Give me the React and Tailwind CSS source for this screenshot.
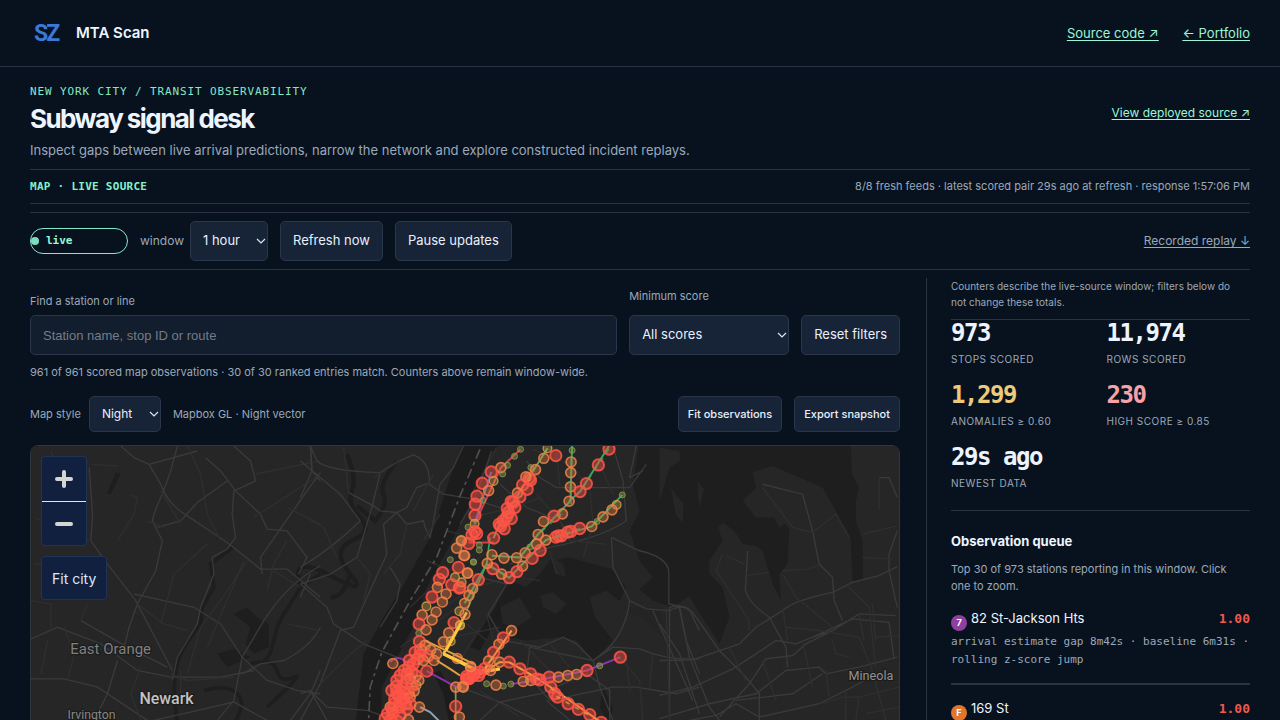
import React from "react";

const RED = "#ff5546";
const ORANGE = "#ee8248";
const OLIVE = "#cfa048";
const GREEN = "#8c9a4c";

const ringStyle = {
  R: { color: RED, r: 17, w: 6, fill: 0.45 },
  O: { color: ORANGE, r: 15, w: 5, fill: 0.38 },
  Y: { color: OLIVE, r: 13, w: 4, fill: 0.38 },
  G: { color: GREEN, r: 9, w: 3, fill: 0.45 },
};

const eastDots = `G182,25 G164,46 G143,73 O123,80 R94,93 G128,99 Y101,120 R67,127 O86,149 R51,166 G69,178 R46,190 R45,224 Y44,249 G24,259
Y263,22 O252,52 R288,44 G213,80 O227,86 R208,112 R212,118 O198,108 R188,132 R202,145 O173,156 R180,168 R154,182 R165,200 R160,184 R142,203 R140,228 R154,233 R130,240 R118,250 R133,264 R122,256 R146,215 R101,292
G337,28 O334,63 O333,95 O332,138 O328,181 R448,24 R416,72 R380,128 R361,152 O308,219 R283,226 O251,242 O235,281 G488,162 Y471,192 O457,207 O430,228 G412,242 O396,257 R360,263 R333,272 R305,285 R288,289 O258,298
O230,310 G210,319 O196,336 O170,351 O132,352 O96,342 R241,329 R217,353 O188,376 R171,393 R148,411 O125,400 R99,384 O82,368 R324,274 R296,285
R50,278 R36,282 R26,308 R44,272 O4,300 O14,345 G58,313 G58,328 G40,364 O22,397 R55,417 O38,444 O27,464 O14,488 O15,521 Y0,555 Y5,425 R0,440
O155,570 R130,592 O117,611 R101,636 O86,661 R75,684 O92,690 R56,705 R28,714 R40,700 R20,715 O32,678 O119,665 R148,665 R180,685 R212,700 R240,718 O190,723 O213,720 G153,731 G130,737 O108,734 G80,730 R268,710 O296,710 O324,705 O351,702 R382,690 G420,676 R482,650 R273,740 R293,770 R325,790 R356,807 R390,823 R425,846 R230,715 R285,760 O10,740`;

const westDots = `Y483,299 O470,322 O492,344 G451,357 R475,380 G521,364 O503,397 R428,396 R418,416 O412,440 Y465,410 R455,432 R478,442 O438,460 R396,469 O427,484 Y379,497 O408,514 O366,523 O396,538 R357,550 O378,568 G356,578 R462,546 Y478,512 Y480,553 O446,577 O430,604 Y452,602 R358,603 R361,628 R345,636 O375,614 O392,628 R384,646 O402,660 R352,655 O410,640 R328,660 O278,669 R340,670 R326,680 R312,690 R335,695 R380,692 R300,705 R346,705 R290,720 O330,715 R318,725 O356,720 Y349,735 R305,742 R275,750 R288,738 O342,752 R325,756 R295,765 R310,775 O330,770 R282,790 R298,800 R320,805 O270,800 R330,790 O358,800 R262,820 R278,818 R300,825 R270,840 R290,842 R255,835 O325,838 R310,755 R336,735 R290,755 R322,700 O370,660 R360,645 R284,775 R316,790 R276,805 R300,785 O472,654 O512,680 R540,695 O467,740 O488,738 R467,798 O478,830 R505,715 R500,708 R520,705`;

function Dots({ data }) {
  return data.trim().split(/\s+/).map((item, i) => {
    const s = ringStyle[item[0]];
    const [x, y] = item.slice(1).split(",");
    return (
      <circle key={i} cx={x} cy={y} r={s.r} fill={s.color} fillOpacity={s.fill} stroke={s.color} strokeOpacity="0.85" strokeWidth={s.w} />
    );
  });
}

function CityMap() {
  return (
    <svg viewBox="0 0 2610 1200" className="block w-full bg-[#262626]" aria-label="Map of scored subway stations" role="img">
      <g transform="translate(1890 -15)" fill="#1e1e1e">
        <path d="M-60 0H575L578 100 600 140 590 180 590 240 610 300 612 420 580 420 575 290 530 210 490 140 340 75 280 95 290 140 250 180 290 230 350 230 390 260 385 370 360 400 365 480 340 430 310 330 290 315 250 310 225 270 190 245 175 260 190 300 150 360 150 400 190 440 210 530 180 610 110 500 90 465 40 500 -20 480 -60 445 -20 410 -60 360 -90 270 -60 210 -80 130Z" />
        <path fill="#262626" d="M115 123 133 145 120 200 115 160ZM0 20 60 30 62 60 30 80 0 180ZM34 140 72 190 70 245 50 225ZM345 230 390 240 360 260Z" />
      </g>
      <g transform="translate(1290 -15)" fill="#1e1e1e">
        <path d="M150 420 200 440 240 400 270 360 330 350 400 370 455 385 500 440 480 480 440 450 390 470 405 530 460 600 400 660 350 600 300 590 200 600 150 590 100 560 110 490ZM430 740 460 800 450 860 420 800Z" />
        <path fill="#262626" d="M120 500 180 470 215 530 170 560 130 550ZM240 465 280 455 320 490 290 520 250 500ZM280 350 310 370 320 410 290 400Z" />
        <path d="M480 500 600 500 620 600 560 540Z" fill="#242424" />
      </g>
      <g transform="translate(810 -15)" fill="#1c1c1c">
        <path d="M490 0 450 110 395 280 300 450 250 530 190 640 160 900H240L245 740 290 650 340 560 380 440 440 330 500 210 545 110 600 0Z" />
        <path d="M450 860 430 760 400 700 420 690 470 780 480 860ZM510 620 560 540 600 480 600 520 540 630Z" />
        <path d="M140 40Q170 110 155 150T180 230 155 300 150 400 90 405 0 430M290 60Q235 130 250 160T225 240L170 195M150 400Q130 470 90 470" fill="none" stroke="#1e1e1e" strokeWidth="13" />
      </g>
      <g transform="translate(-30 -15)">
        <path fill="#1e1e1e" d="M285 95 300 98 270 160 258 158ZM640 520 680 500 710 530 745 550 745 620 700 640 675 610 690 560ZM590 640 640 625 690 650 620 680Z" />
        <path d="M840 440Q810 490 790 520T760 600 730 660M900 400 840 440M690 670Q760 650 770 690T820 710 740 800M550 750Q620 730 650 760T640 850M470 850Q455 750 465 690T540 550L545 500 580 440 570 370 635 320" fill="none" stroke="#1e1e1e" strokeWidth="11" />
      </g>

      <g fill="none" stroke="#3a3a3a" strokeWidth="4">
        <g transform="translate(-30 -15)">
          <path d="M300 15 340 50 385 70 420 130Q440 190 500 225L620 305 720 385 800 385 900 470M385 70 530 30M470 15 450 90 425 160Q400 210 395 240L425 300 405 390 350 490 325 560 310 620M640 15 690 60 705 120 640 150 635 220 645 290 620 325 575 350 580 400 540 500 530 550 470 650 455 720M555 50 600 90 645 150 720 220 740 265 800 270 860 350 835 400M900 95 860 150 790 250 720 350 725 400M870 15 875 90 900 120M410 260 480 240 530 185 620 120M205 80 215 220 210 300 260 370 345 480 455 690M900 375Q800 430 730 540L665 650 640 780M30 595 110 560 240 610 350 690 450 710 600 710 700 690M180 540 320 620 440 680M30 715 130 715 230 740 380 840M290 660 260 760 220 840M340 460 520 500 600 550 665 650 740 720 830 750 900 760M665 700 720 670 790 660Q870 620 900 560M900 690 870 760 810 840M400 840 640 785 740 840M640 780 590 840" />
          <path stroke="#2f2f2f" d="M90 30 130 120M215 70 290 75M330 160 350 170 340 220 290 300M500 15 540 100 560 220 600 300M560 310 460 400 420 550M680 360 600 480 540 560 500 700M670 360 560 620M380 240 430 260M40 370 90 370M30 480 90 490 90 570M200 490 180 540M350 490 430 550 500 570M700 230 900 100M800 200 900 250M800 300 760 370 740 450M800 550 900 570M760 390 840 440M80 600 60 700M130 560 160 640 140 720M450 700 500 720 640 710M480 690 480 780M360 680 330 760 360 840M700 100 900 60M40 230 210 300M480 250 420 150" />
        </g>
        <g transform="translate(810 -15)">
          <path d="M30 15 50 60Q80 90 240 95 290 60 340 42 390 60 388 130L430 160 520 175 600 200M240 95 215 200 170 350 90 400 0 430M0 380Q100 320 180 240L120 160 0 60M30 15 35 90 0 170M240 210 290 215 320 200 350 140 390 125M490 15 460 80 420 130 400 240 390 290 375 260 370 240 320 250 290 215 250 250 260 340 200 470 160 560 120 570 60 730 0 840M145 155 220 195 240 210M0 430 80 500 100 550 190 610 290 650 360 680M270 380 300 430 290 480 240 560M30 400 0 470M30 750 80 800 200 810 260 830M0 760 30 750 80 840" />
          <path stroke="#2f2f2f" d="M130 20 145 155M220 110 300 60M170 350 210 400 190 480M320 250 300 340 250 400M400 100 340 210M420 220 370 300M0 220 70 260 110 350M60 730 140 650 200 600M480 400 600 300M400 520 520 440 600 420M330 500 520 320M300 620 500 480M410 600 600 560M560 520 580 600M500 550 560 600M380 360 480 400M440 270 560 300M590 20 520 150" />
        </g>
        <g transform="translate(1290 -15)">
          <path d="M95 30 60 130 30 200 0 250M120 130 200 200 300 240 330 300M200 60 240 110 290 140 510 140 560 70M530 15 510 110 550 90M460 15 490 120 500 240Q430 290 270 320L150 370M455 290 540 330Q630 350 628 400V490L680 500M455 290 460 380 510 480Q500 570 440 630L400 660 350 610 310 590 240 620 130 600 85 520 140 430 60 410M510 480 560 505 630 510Q690 480 700 530L720 570M580 510 620 600 700 780M660 500 680 600 720 700M400 660 460 620 540 625Q620 660 720 655M400 660 420 740 460 840M400 660 210 620 200 700 270 780 460 740 530 740 650 760 720 740M0 740 120 785 230 840M260 780 330 840M60 840 120 785 240 760 380 700 450 750 450 840M630 500V840" />
          <path stroke="#2f2f2f" d="M220 25 330 70 390 140 400 250 370 350M290 20 300 140M230 160 350 300M420 70 460 160M30 230 160 200 240 170M270 330 290 400M330 300 440 310M180 600 270 690 280 780M260 600 330 680M470 640 540 720 550 840M60 560 0 660M500 650 510 750M580 640 570 740M60 750 180 830M180 410 240 420" />
        </g>
        <g transform="translate(1890 -15)">
          <path d="M0 765 100 740 220 685 290 640 350 600 410 610 460 590 520 570 600 520 710 525M460 590 580 535 690 545 705 655M0 660 100 658 240 610 290 560 370 510Q400 480 520 455L580 425 660 405 715 378M30 500Q80 485 110 530L180 630 260 710 300 760V840M60 500 90 650 150 800 180 840M0 550 60 640 120 820M310 130 430 160 460 270 480 370 520 410 525 480 550 540M265 330 258 450Q270 490 330 530L380 620 385 680M180 830 270 730 320 655 400 645 440 610 520 570M0 835 150 790 290 760 380 690 480 680 500 700 600 680 715 650M230 780 400 760 490 700M90 840 170 825 230 790 300 830 480 790 580 740 650 700M660 110 690 110 715 170M715 270 690 340 690 390 715 500" />
          <path stroke="#2f2f2f" d="M310 140 400 260 460 275 530 220 570 290M190 340 170 390 270 540 270 570M200 345 255 370M370 390 440 385 480 375M370 400 410 470 520 560M260 405 330 395M370 500 385 600M380 560 480 570 600 590 640 690 680 840M650 590 720 585M520 600 530 640 570 650M610 350 700 355M610 280 715 255M660 110 660 210M560 430 630 500 650 680M600 520 615 600M640 490 650 600M310 660 350 780M430 600 460 740M500 690 510 770M490 790 550 770 600 770 720 740M560 750V840M600 770 590 840M620 820 720 800M20 500 30 840M210 620 260 720" />
        </g>
      </g>

      <g transform="translate(810 -15)" fill="none">
        <path d="M540 25 480 165 410 350 330 480 245 635 210 740 205 840" stroke="#505050" strokeWidth="5" strokeDasharray="30 12 10 12" />
        <path d="M430 640 540 695 600 685" stroke="#ffce4a" strokeWidth="10" />
        <path d="M430 640 500 515" stroke="#f5c842" strokeWidth="8" />
        <path d="M375 600 460 640 520 670M410 660 450 685 480 705" stroke="#e0a33b" strokeWidth="6" />
        <path d="M270 665Q290 640 320 665M380 692 470 740" stroke="#8a31a8" strokeWidth="6" />
        <path d="M360 800 390 815 420 845" stroke="#8fa0b0" strokeWidth="6" />
        <path d="M467 740V840" stroke="#7ba05b" strokeWidth="5" />
        <path d="M500 510 560 370 570 290" stroke="#2fab5f" strokeWidth="5" />
      </g>
      <g transform="translate(1290 -15)" fill="none" strokeWidth="6">
        <path d="M337 15 332 180 235 280 180 350 96 345M448 15 361 152 328 181M488 162 396 257 258 298 148 411 80 370 14 488" stroke="#2fa565" />
        <path d="M182 25 123 80 44 249M25 305H101" stroke="#d63c4a" />
        <path d="M94 93 44 249" stroke="#3970d8" />
        <path d="M263 22 118 250 101 292" stroke="#52a35c" />
        <path d="M155 570 75 684 20 715M56 705 119 665 148 665 240 718 425 846" stroke="#f0a33b" />
        <path d="M153 731 240 718 382 690 482 650" stroke="#8b33b0" />
      </g>
      <g transform="translate(810 -15)"><Dots data={westDots} /></g>
      <g transform="translate(1290 -15)"><Dots data={eastDots} /></g>
      <g transform="translate(810 -15)" stroke="#ffc93d" strokeWidth="8" fill="none">
        <path d="M430 640 500 672M438 630 485 545" />
      </g>
      <g transform="translate(1290 -15)" stroke="#f0a33b" strokeOpacity="0.7" strokeWidth="5" strokeDasharray="14 18" fill="none">
        <path d="M155 570 75 684M148 665 240 718M273 740 293 770 425 846" />
        <path d="M334 55V190M448 24 361 152M305 219 235 281M360 263 258 298" stroke="#6f9a50" />
      </g>
      <g fontFamily="Roboto, 'Open Sans', sans-serif" stroke="#1c1c1c" strokeWidth="7" paintOrder="stroke">
        <text x="118" y="624" fontSize="45" fill="#808080">East Orange</text>
        <text x="326" y="776" fontSize="48" fontWeight="500" fill="#c2c2c2">Newark</text>
        <text x="110" y="822" fontSize="37" fill="#868686">Irvington</text>
        <text x="2458" y="704" fontSize="38" fill="#929292">Mineola</text>
      </g>
    </svg>
  );
}

const line = "border-[#283344]";
const control = "rounded-[5px] border border-[#2a3649] bg-[#172337] text-[#e8f0fc]";
const small = "text-[11px] text-[#9ba8ba]";
const mono = "font-['DejaVu_Sans_Mono',monospace]";

function SelectBox({ id, children, className }) {
  return (
    <div className={`relative ${className}`}>
      <select id={id} className={`h-full w-full appearance-none pl-3 ${control}`}>
        {children}
      </select>
      <svg viewBox="0 0 10 6" className="pointer-events-none absolute top-1/2 right-[2px] -mt-[3px] h-[6px] w-[10px]" fill="none" stroke="#dce6f5" strokeWidth="1.2">
        <path d="m1 1 4 4 4-4" />
      </svg>
    </div>
  );
}

const stats = [
  ["973", "Stops scored", "text-[#edf4ff]"],
  ["11,974", "Rows scored", "text-[#edf4ff]"],
  ["1,299", "Anomalies ≥ 0.60", "text-[#edc97a]"],
  ["230", "High score ≥ 0.85", "text-[#f5a3a9]"],
  ["29s ago", "Newest data", "text-[#edf4ff]"],
];

const queue = [
  { route: "7", badge: "bg-[#8f3f9e]", name: "82 St-Jackson Hts", score: "1.00", detail: "arrival estimate gap 8m42s · baseline 6m31s · rolling z-score jump" },
  { route: "F", badge: "bg-[#e2752b]", name: "169 St", score: "1.00" },
];

export default function App() {
  return (
    <div className="min-h-screen bg-[#08121e] font-[Inter,sans-serif] text-[#edf4ff]">
      <header className={`flex h-[67px] items-center justify-between border-b px-[30px] ${line}`}>
        <div className="flex items-center gap-4">
          <svg viewBox="0 0 30 30" className="h-[30px] w-[30px]" aria-label="SZ">
            <text x="4" y="23" fontFamily="Roboto, sans-serif" fontWeight="700" fontSize="23" letterSpacing="-2" fill="#3b78d8">SZ</text>
          </svg>
          <span className="text-[15px] font-semibold">MTA Scan</span>
        </div>
        <nav className="flex gap-6 pt-[2px] text-[13px] text-[#99f6d8] underline underline-offset-2">
          <a href="#source">Source code ↗</a>
          <a href="#portfolio">← Portfolio</a>
        </nav>
      </header>

      <main className="px-[30px]">
        <section className={`flex items-start justify-between border-b pt-[17px] pb-[9px] ${line}`}>
          <div>
            <p className={`text-[11px] leading-4 tracking-[0.08em] text-[#84e8c8] uppercase ${mono}`}>New York City / Transit observability</p>
            <h1 className="mt-[3px] text-[26px] leading-8 font-bold tracking-[-0.06em]">Subway signal desk</h1>
            <p className="mt-[5px] text-[13px] leading-5 text-[#9ba8ba]">Inspect gaps between live arrival predictions, narrow the network and explore constructed incident replays.</p>
          </div>
          <a href="#deployed" className="mt-[19px] text-[12px] leading-5 text-[#99f6d8] underline underline-offset-2">View deployed source ↗</a>
        </section>

        <section className={`flex h-[34px] items-center justify-between border-b ${line}`}>
          <strong className={`text-[11px] leading-4 tracking-[0.025em] text-[#84f0cc] uppercase ${mono}`}>Map · Live source</strong>
          <span className={small}>8/8 fresh feeds · latest scored pair 29s ago at refresh · response 1:57:06 PM</span>
        </section>

        <section className={`mt-2 flex h-[58px] items-center justify-between border-y ${line}`}>
          <div className="flex items-center gap-3 text-[13px]">
            <span className={`flex h-[26px] w-[98px] items-center gap-[7px] rounded-full border border-[#84e8c8] text-[11px] font-bold text-[#99f6d8] ${mono}`}>
              <i className="h-2 w-2 rounded-full bg-[#7ddcc0]" />
              live
            </span>
            <div className="flex items-center gap-[6px]">
              <label htmlFor="window" className="text-[12px] text-[#9ba8ba]">window</label>
              <SelectBox id="window" className="h-10 w-[78px]"><option>1 hour</option></SelectBox>
            </div>
            <button className={`h-10 px-3 ${control}`}>Refresh now</button>
            <button className={`h-10 px-3 ${control}`}>Pause updates</button>
          </div>
          <a href="#replay" className="text-[12px] text-[#9ba8ba] underline underline-offset-2">Recorded replay ↓</a>
        </section>

        <div className="mt-2 grid grid-cols-[minmax(0,1fr)_324px] gap-[26px]">
          <div>
            <form className="flex items-end gap-3 pt-[10px] text-[13px]">
              <div className="flex flex-1 flex-col gap-[6px]">
                <label htmlFor="find" className={`leading-4 ${small}`}>Find a station or line</label>
                <input id="find" placeholder="Station name, stop ID or route" className="h-10 w-full rounded-[5px] border border-[#2a3649] bg-[#121d2d] px-3 font-['Liberation_Sans',Arial,sans-serif] placeholder:text-[#757c86]" />
              </div>
              <div className="flex w-40 flex-col gap-[11px]">
                <label htmlFor="score" className={`leading-4 ${small}`}>Minimum score</label>
                <SelectBox id="score" className="h-10"><option>All scores</option></SelectBox>
              </div>
              <button type="button" className={`h-10 px-3 ${control}`}>Reset filters</button>
            </form>
            <p className={`mt-2 leading-[18px] ${small}`}>961 of 961 scored map observations · 30 of 30 ranked entries match. Counters above remain window-wide.</p>
            <div className="mt-[15px] mb-[13px] flex items-center justify-between">
              <div className={`flex items-center ${small}`}>
                <label htmlFor="style" className="mr-2">Map style</label>
                <SelectBox id="style" className="mr-3 h-9 w-[72px] text-[12px]"><option>Night</option></SelectBox>
                <span>Mapbox GL · Night vector</span>
              </div>
              <div className="flex gap-3 text-[11px]">
                <button className={`h-9 px-[9px] font-medium ${control}`}>Fit observations</button>
                <button className={`h-9 px-[9px] font-medium ${control}`}>Export snapshot</button>
              </div>
            </div>
            <div className="relative overflow-hidden rounded-t-lg border border-[#30363d]">
              <CityMap />
              <div className="absolute top-[10px] left-[10px] flex flex-col items-start gap-[10px]">
                <div className="flex w-[46px] flex-col divide-y divide-[#dce6f5] rounded-[4px] border border-[#223456] bg-[#11203f]">
                  <button aria-label="Zoom in" className="grid h-[45px] place-items-center">
                    <svg viewBox="0 0 18 18" className="h-[18px] w-[18px]" stroke="#d5d5d2" strokeWidth="4" strokeLinecap="round"><path d="M2 9h14M9 2v14" /></svg>
                  </button>
                  <button aria-label="Zoom out" className="grid h-[43px] place-items-center">
                    <svg viewBox="0 0 18 18" className="h-[18px] w-[18px]" stroke="#d5d5d2" strokeWidth="4" strokeLinecap="round"><path d="M2 9h14" /></svg>
                  </button>
                </div>
                <button className="h-[44px] rounded-[4px] border border-[#223456] bg-[#11203f] px-[10px] text-[14px] text-[#dce8fb]">Fit city</button>
              </div>
            </div>
          </div>

          <aside className={`border-l pl-6 ${line}`}>
            <p className={`border-b pr-3 pb-[9px] text-[10px] leading-4 text-[#9ba8ba] ${line}`}>Counters describe the live-source window; filters below do not change these totals.</p>
            <dl className={`grid grid-cols-2 gap-x-3 gap-y-[15px] border-b pb-[19px] ${line}`}>
              {stats.map(([value, label, color]) => (
                <div key={label} className="flex flex-col-reverse">
                  <dt className="mt-[5px] text-[10px] leading-4 tracking-[0.05em] text-[#9ba8ba] uppercase">{label}</dt>
                  <dd className={`text-[24px] leading-[26px] font-bold tracking-[-0.06em] ${mono} ${color}`}>{value}</dd>
                </div>
              ))}
            </dl>
            <h2 className="mt-5 text-[13px] leading-5 font-bold">Observation queue</h2>
            <p className={`mt-[10px] pr-3 leading-[17px] ${small}`}>Top 30 of 973 stations reporting in this window. Click one to zoom.</p>
            <ul className="mt-[13px]">
              {queue.map((q) => (
                <li key={q.name} className={`mb-[13px] border-b-2 pb-[14px] ${line}`}>
                  <div className="flex h-[22px] items-center gap-1 text-[13px]">
                    <span className={`mt-[7px] grid h-4 w-4 place-items-center rounded-full text-[9px] font-bold text-white ${q.badge}`}>{q.route}</span>
                    <a href="#map" className="grow">{q.name}</a>
                    <strong className={`text-[#f0584c] ${mono}`}>{q.score}</strong>
                  </div>
                  {q.detail && <p className={`mt-[3px] text-[11px] leading-[18px] text-[#9ba8ba] ${mono}`}>{q.detail}</p>}
                </li>
              ))}
            </ul>
          </aside>
        </div>
      </main>
    </div>
  );
}
